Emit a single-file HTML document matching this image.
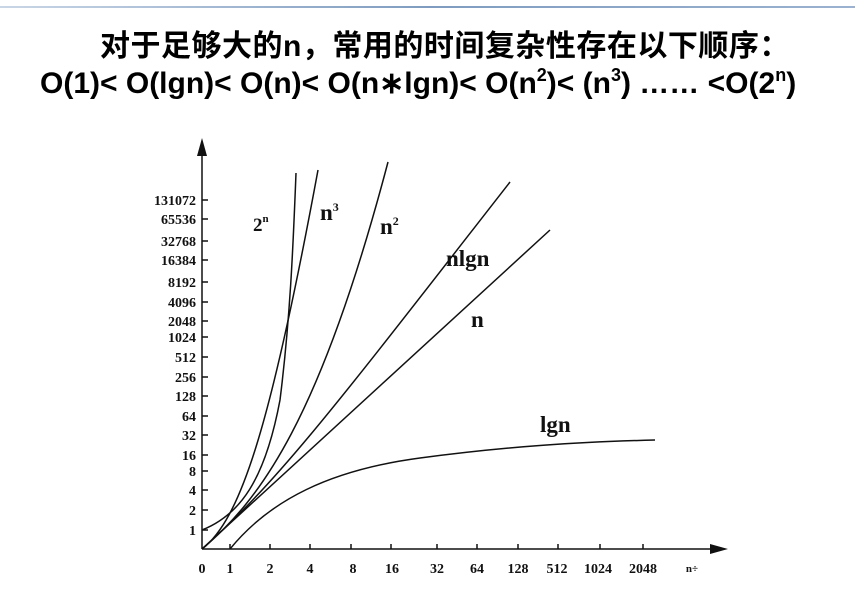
<!DOCTYPE html>
<html><head><meta charset="utf-8"><style>
body{margin:0;width:861px;height:609px;background:#fff;overflow:hidden;position:relative;font-family:"Liberation Sans","Noto Sans CJK SC",sans-serif}
.line{position:absolute;left:0;top:6px;width:855px;height:2px;background:linear-gradient(90deg,#c9d6e6,#7f9cc0 50%,#9bb2d0)}
.t1{position:absolute;left:100px;top:21px;font-size:30px;font-weight:bold;color:#000;white-space:nowrap;letter-spacing:0.5px}
.t2{position:absolute;left:40px;top:66px;font-size:30px;font-weight:bold;color:#000;white-space:nowrap}
sup{font-size:18px;vertical-align:12px;line-height:0}
svg{position:absolute;left:0;top:0}
</style></head><body>
<div class="line"></div>
<div class="t1">对于足够大的n，常用的时间复杂性存在以下顺序：</div>
<div class="t2">O(1)&lt; O(lgn)&lt; O(n)&lt; O(n∗lgn)&lt; O(n<sup>2</sup>)&lt; (n<sup>3</sup>) …… &lt;O(2<sup>n</sup>)</div>
<svg width="861" height="609" font-family="Liberation Serif, serif" font-weight="bold">
<g stroke="#111" stroke-width="1.5" fill="none">
<line x1="202" y1="150" x2="202" y2="549"/>
<line x1="202" y1="549" x2="715" y2="549"/>
<path d="M202 200h6M202 219h6M202 241h6M202 260h6M202 282h6M202 302h6M202 321h6M202 337h6M202 357h6M202 377h6M202 396h6M202 416h6M202 435h6M202 455h6M202 471h6M202 490h6M202 510h6M202 530h6"/>
<path d="M230 549v-5M270 549v-5M310 549v-5M351 549v-5M391 549v-5M437 549v-5M477 549v-5M518 549v-5M558 549v-5M600 549v-5M643 549v-5"/>
<path d="M230 549 C 270 500, 330 470, 420 458 S 580 442, 655 440"/>
<path d="M202 549 L550 230"/>
<path d="M202 549 C 280 480, 340 400, 510 182"/>
<path d="M202 549 C 260 500, 320 420, 388 162"/>
<path d="M202 549 C 240 520, 270 430, 318 170"/>
<path d="M202 530 C 240 515, 265 480, 280 400 C 290 320, 293 250, 296 173"/>
</g>
<path d="M202 138 L197 156 L207 156 Z" fill="#111"/>
<path d="M728 549 L710 544 L710 554 Z" fill="#111"/>
<g font-size="14" text-anchor="end" fill="#111">
<text x="196" y="205">131072</text><text x="196" y="224">65536</text><text x="196" y="246">32768</text><text x="196" y="265">16384</text><text x="196" y="287">8192</text><text x="196" y="307">4096</text><text x="196" y="326">2048</text><text x="196" y="342">1024</text><text x="196" y="362">512</text><text x="196" y="382">256</text><text x="196" y="401">128</text><text x="196" y="421">64</text><text x="196" y="440">32</text><text x="196" y="460">16</text><text x="196" y="476">8</text><text x="196" y="495">4</text><text x="196" y="515">2</text><text x="196" y="535">1</text>
</g>
<g font-size="14" text-anchor="middle" fill="#111">
<text x="202" y="573">0</text><text x="230" y="573">1</text><text x="270" y="573">2</text><text x="310" y="573">4</text><text x="353" y="573">8</text><text x="392" y="573">16</text><text x="437" y="573">32</text><text x="477" y="573">64</text><text x="518" y="573">128</text><text x="557" y="573">512</text><text x="598" y="573">1024</text><text x="643" y="573">2048</text><text x="692" y="572" font-size="11">n÷</text>
</g>
<g fill="#111" font-size="23">
<text x="253" y="231" font-size="19">2<tspan font-size="11" dy="-9">n</tspan></text>
<text x="320" y="220">n<tspan font-size="12" dy="-9">3</tspan></text>
<text x="380" y="234">n<tspan font-size="12" dy="-9">2</tspan></text>
<text x="446" y="266">nlgn</text>
<text x="471" y="327">n</text>
<text x="540" y="432">lgn</text>
</g>
</svg>
</body></html>
